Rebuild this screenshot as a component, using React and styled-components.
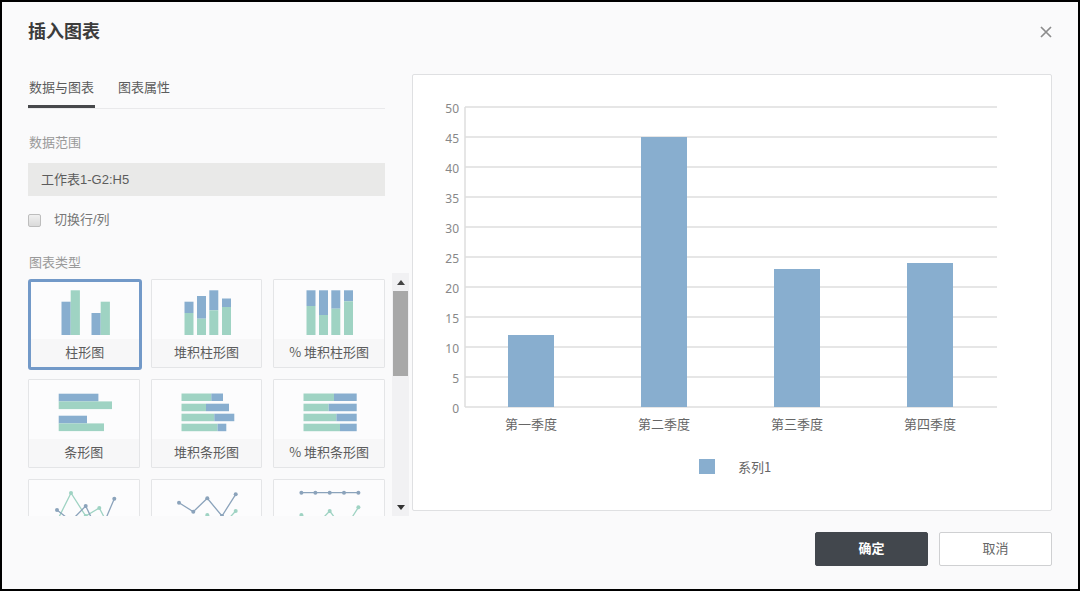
import React, { useState } from 'react';
import styled, { createGlobalStyle } from 'styled-components';

const BLUE = '#88aecf';
const GREEN = '#9fd3c3';
const CJK = '"Noto Sans CJK SC", sans-serif';

//preview chart data
const series = [
    { label: '第一季度', value: 12 },
    { label: '第二季度', value: 45 },
    { label: '第三季度', value: 23 },
    { label: '第四季度', value: 24 },
];
const ticks = [0, 5, 10, 15, 20, 25, 30, 35, 40, 45, 50];

//thumbnails: [x, y, width, height, color]
const columns = (bars) =>
    bars.flatMap(([x, top, split]) => [
        [x, top, 9, split - top, BLUE],
        [x, split, 9, 55 - split, GREEN],
    ]);

const rows = (bars) =>
    bars.flatMap(([y, split, end]) => [
        [29.5, y, split - 29.5, 7.5, GREEN],
        [split, y, end - split, 7.5, BLUE],
    ]);

const chartTypes = [
    {
        id: 'column',
        name: '柱形图',
        rects: [
            [31.5, 20.7, 9.2, 33.3, BLUE],
            [40.7, 9.3, 9.2, 44.7, GREEN],
            [61.5, 32, 9.2, 22, BLUE],
            [70.7, 20.7, 9.2, 33.3, GREEN],
        ],
    },
    {
        id: 'column-stacked',
        name: '堆积柱形图',
        rects: columns([[32.5, 21.7, 33], [45, 16, 38.7], [57.3, 10.3, 30.3], [70, 18.5, 27]]),
    },
    {
        id: 'column-percent',
        name: '% 堆积柱形图',
        rects: columns([[32.5, 10.3, 26], [45, 10.3, 35], [57.3, 10.3, 28.7], [70, 10.3, 21.3]]),
    },
    {
        id: 'bar',
        name: '条形图',
        rects: [
            [29.7, 13.7, 39.7, 7.7, BLUE],
            [29.7, 21.4, 53.3, 7.7, GREEN],
            [29.7, 35.7, 28.3, 7.7, BLUE],
            [29.7, 43.4, 45.3, 7.7, GREEN],
        ],
    },
    {
        id: 'bar-stacked',
        name: '堆积条形图',
        rects: rows([[13.5, 59.3, 71], [23.7, 54, 77], [33.7, 62.3, 82.3], [43.7, 65.6, 74.3]]),
    },
    {
        id: 'bar-percent',
        name: '% 堆积条形图',
        rects: rows([[13.5, 60, 82.7], [23.7, 54.7, 82.7], [33.7, 62.4, 82.7], [43.7, 66, 82.7]]),
    },
    {
        id: 'line',
        name: '折线图',
        lines: [
            { color: GREEN, points: [[28, 41], [42, 13], [56.7, 36], [70.3, 28], [84, 54]] },
            { color: '#8ba3bb', points: [[28, 30], [42, 41], [56.7, 26], [70.3, 54], [85.3, 18.7]] },
        ],
    },
    {
        id: 'line-stacked',
        name: '堆积折线图',
        lines: [
            { color: GREEN, points: [[27, 48], [41, 52], [55.3, 35], [70, 46], [83.7, 31]] },
            { color: '#8ba3bb', points: [[27, 22.7], [41.3, 31.7], [55.3, 18.3], [70, 36], [83.7, 14.3]] },
        ],
    },
    {
        id: 'line-percent',
        name: '% 堆积折线图',
        lines: [
            { color: GREEN, points: [[27.4, 35], [41.4, 46], [55.7, 31], [70, 50], [84.4, 27.3]] },
            { color: '#8ba3bb', points: [[27.4, 12.7], [41.4, 12.7], [55.7, 12.7], [70, 12.7], [84.4, 12.7]] },
        ],
    },
];

const Thumbnail = ({ rects = [], lines = [] }) => (
    <svg width="110" height="60" viewBox="0 0 110 60" aria-hidden="true">
        {rects.map(([x, y, w, h, color], i) => (
            <rect key={i} x={x} y={y} width={w} height={h} fill={color} />
        ))}
        {lines.map(({ color, points }, i) => (
            <g key={i} fill={color}>
                <polyline points={points.join(' ')} fill="none" stroke={color} strokeWidth="1.3" />
                {points.map(([x, y]) => (
                    <circle key={x} cx={x} cy={y} r="2" />
                ))}
            </g>
        ))}
    </svg>
);

const Preview = () => {
    const baseline = 332;
    const scale = 6;
    return (
        <Chart viewBox="0 0 638 435" role="img" aria-label="系列1">
            {ticks.map((tick) => {
                const y = baseline - tick * scale;
                return (
                    <g key={tick}>
                        <line x1="52" x2="584" y1={y} y2={y} stroke="#dedede" strokeWidth="1.5" />
                        <AxisText x="46" y={y + 6} textAnchor="end">{tick}</AxisText>
                    </g>
                );
            })}
            <line x1="52" x2="52" y1="32" y2={baseline} stroke="#dedede" strokeWidth="1.5" />
            {series.map(({ label, value }, i) => {
                const center = 118 + i * 133;
                return (
                    <g key={label}>
                        <rect x={center - 23} y={baseline - value * scale} width="46" height={value * scale} fill={BLUE} />
                        <CategoryText x={center} y="354" textAnchor="middle">{label}</CategoryText>
                    </g>
                );
            })}
            <rect x="286" y="384" width="16" height="15" fill={BLUE} />
            <CategoryText x="325" y="397">系列1</CategoryText>
        </Chart>
    );
};

const App = () => {
    const [tab, setTab] = useState('data');
    const [selected, setSelected] = useState('column');
    const [progress, setProgress] = useState(0);

    const scrollHandler = (e) => {
        const { scrollTop, scrollHeight, clientHeight } = e.target;
        setProgress(scrollTop / Math.max(1, scrollHeight - clientHeight));
    };

    return (
        <>
        <GlobalStyle />
        <Dialog role="dialog" aria-labelledby="dialog-title">
            <Header>
                <Title id="dialog-title">插入图表</Title>
                <CloseButton type="button" aria-label="关闭">
                    <svg width="12" height="12" viewBox="0 0 12 12">
                        <path d="M1 1L11 11M11 1L1 11" stroke="#8c8c8c" strokeWidth="1.7" />
                    </svg>
                </CloseButton>
            </Header>
            <Body>
                <Settings>
                    <Tabs role="tablist">
                        <Tab type="button" role="tab" $active={tab === 'data'} aria-selected={tab === 'data'} onClick={() => setTab('data')}>
                            数据与图表
                        </Tab>
                        <Tab type="button" role="tab" $active={tab === 'props'} aria-selected={tab === 'props'} onClick={() => setTab('props')}>
                            图表属性
                        </Tab>
                    </Tabs>
                    <Field>
                        <FieldLabel htmlFor="range">数据范围</FieldLabel>
                        <RangeInput id="range" type="text" defaultValue="工作表1-G2:H5" />
                    </Field>
                    <CheckRow>
                        <Checkbox type="checkbox" />
                        切换行/列
                    </CheckRow>
                    <GroupLabel id="type-label">图表类型</GroupLabel>
                    <TypeArea>
                        <TypeList role="group" aria-labelledby="type-label" onScroll={scrollHandler}>
                            {chartTypes.map((type) => (
                                <TypeCard
                                    key={type.id}
                                    type="button"
                                    $selected={selected === type.id}
                                    aria-pressed={selected === type.id}
                                    onClick={() => setSelected(type.id)}
                                >
                                    <Art><Thumbnail rects={type.rects} lines={type.lines} /></Art>
                                    <Caption>{type.name}</Caption>
                                </TypeCard>
                            ))}
                        </TypeList>
                        <Rail aria-hidden="true">
                            <Arrow><svg width="8" height="5" viewBox="0 0 8 5"><path d="M4 0L8 5H0Z" fill="#444" /></svg></Arrow>
                            <Track>
                                <div style={{ flexGrow: progress }} />
                                <Thumb />
                            </Track>
                            <Arrow><svg width="8" height="5" viewBox="0 0 8 5"><path d="M0 0H8L4 5Z" fill="#333" /></svg></Arrow>
                        </Rail>
                    </TypeArea>
                </Settings>
                <PreviewPanel>
                    <Preview />
                </PreviewPanel>
            </Body>
            <Footer>
                <Button type="button" $primary>确定</Button>
                <Button type="button">取消</Button>
            </Footer>
        </Dialog>
        </>
    );
};

const GlobalStyle = createGlobalStyle`
    *{
        box-sizing: border-box;
    }
    body{
        margin: 0;
        font-family: "Liberation Sans", "Noto Sans CJK SC", sans-serif;
        font-size: 13px;
        line-height: 20px;
        color: #5c5c5c;
    }
    button, input{
        font: inherit;
        color: inherit;
    }
    button{
        padding: 0;
        cursor: pointer;
    }
    svg{
        display: block;
        flex-shrink: 0;
    }
`;

const Dialog = styled.div`
    display: flex;
    flex-direction: column;
    height: 100vh;
    min-height: 480px;
    border: 2px solid #000;
    background: #fafafb;
`;

const Header = styled.header`
    display: flex;
    align-items: center;
    justify-content: space-between;
    padding: 18px 26px 30px;
`;

const Title = styled.h1`
    margin: 0;
    font-size: 18px;
    line-height: 24px;
    font-weight: bold;
    color: #3c3c3c;
`;

const CloseButton = styled.button`
    border: 0;
    background: none;
`;

const Body = styled.div`
    display: grid;
    grid-template-columns: 381px minmax(0, 1fr);
    grid-template-rows: minmax(0, 1fr);
    gap: 3px;
    flex: 1;
    min-height: 0;
    padding: 0 26px;
`;

const Settings = styled.section`
    display: flex;
    flex-direction: column;
    min-height: 0;
`;

const Tabs = styled.div`
    display: flex;
    gap: 22px;
    margin: 0 24px 24px 0;
    border-bottom: 1px solid #e9e9eb;
`;

const Tab = styled.button`
    height: 34px;
    padding: 0 1px 3px;
    border: 0;
    border-bottom: 3px solid ${({ $active }) => ($active ? '#47484b' : 'transparent')};
    background: none;
`;

const Field = styled.div`
    display: flex;
    flex-direction: column;
    gap: 10px;
    margin-right: 24px;
`;

const FieldLabel = styled.label`
    padding-left: 1px;
    color: #999;
`;

const RangeInput = styled.input`
    width: 100%;
    height: 33px;
    padding: 0 13px 2px;
    border: 0;
    background: #e9e9e8;
`;

const CheckRow = styled.label`
    display: flex;
    align-items: center;
    gap: 13px;
    margin-top: 14px;
    color: #777;
`;

const Checkbox = styled.input`
    appearance: none;
    width: 13px;
    height: 13px;
    margin: 0;
    border: 1px solid #bdbdbd;
    border-radius: 2px;
    background: linear-gradient(#f0f0f0, #dadada);
    &:checked{
        background: ${BLUE};
    }
`;

const GroupLabel = styled.div`
    margin-top: 23px;
    padding-left: 1px;
    color: #999;
`;

const TypeArea = styled.div`
    display: flex;
    gap: 7px;
    flex: 1;
    min-height: 0;
`;

const TypeList = styled.div`
    display: grid;
    grid-template-columns: repeat(3, minmax(0, 1fr));
    grid-auto-rows: 89px;
    gap: 11px;
    flex: 1;
    padding-top: 6px;
    overflow-y: auto;
    scrollbar-width: none;
`;

const TypeCard = styled.button`
    display: flex;
    flex-direction: column;
    margin: ${({ $selected }) => ($selected ? '0 -2px -2px 0' : '0')};
    border: ${({ $selected }) => ($selected ? '3px solid #7299c8' : '1px solid #e4e5e7')};
    border-radius: ${({ $selected }) => ($selected ? '3px' : '1px')};
    background: #fcfcfd;
    font-family: ${CJK};
`;

const Art = styled.span`
    display: flex;
    align-items: center;
    justify-content: center;
    align-self: stretch;
    flex: 1;
    min-height: 0;
`;

const Caption = styled.span`
    align-self: stretch;
    height: 28px;
    line-height: 26px;
    background: #f7f7f8;
    text-align: center;
    white-space: nowrap;
`;

const Rail = styled.div`
    display: flex;
    flex-direction: column;
    width: 17px;
    background: #f1f1f3;
`;

const Arrow = styled.span`
    display: flex;
    align-items: center;
    justify-content: center;
    height: 18px;
`;

const Track = styled.div`
    display: flex;
    flex-direction: column;
    flex: 1;
    padding: 0 1px;
`;

const Thumb = styled.div`
    height: 85px;
    background: #a8a8a8;
`;

const PreviewPanel = styled.section`
    margin-bottom: 5px;
    border: 1px solid #dfe0e2;
    border-radius: 2px;
    background: #fff;
`;

const Chart = styled.svg`
    width: 100%;
    height: 100%;
`;

const AxisText = styled.text`
    font-family: "Noto Sans", sans-serif;
    font-size: 12px;
    fill: #888;
`;

const CategoryText = styled.text`
    font-family: ${CJK};
    font-size: 13px;
    fill: #666;
`;

const Footer = styled.footer`
    display: flex;
    justify-content: flex-end;
    gap: 11px;
    padding: 16px 26px 23px;
`;

const Button = styled.button`
    width: 113px;
    height: 34px;
    border: 1px solid ${({ $primary }) => ($primary ? '#42474d' : '#cfd0d2')};
    border-radius: 2px;
    background: ${({ $primary }) => ($primary ? '#42474d' : '#fff')};
    color: ${({ $primary }) => ($primary ? '#fff' : '#666')};
    font-weight: ${({ $primary }) => ($primary ? 'bold' : 'normal')};
`;

export default App;
